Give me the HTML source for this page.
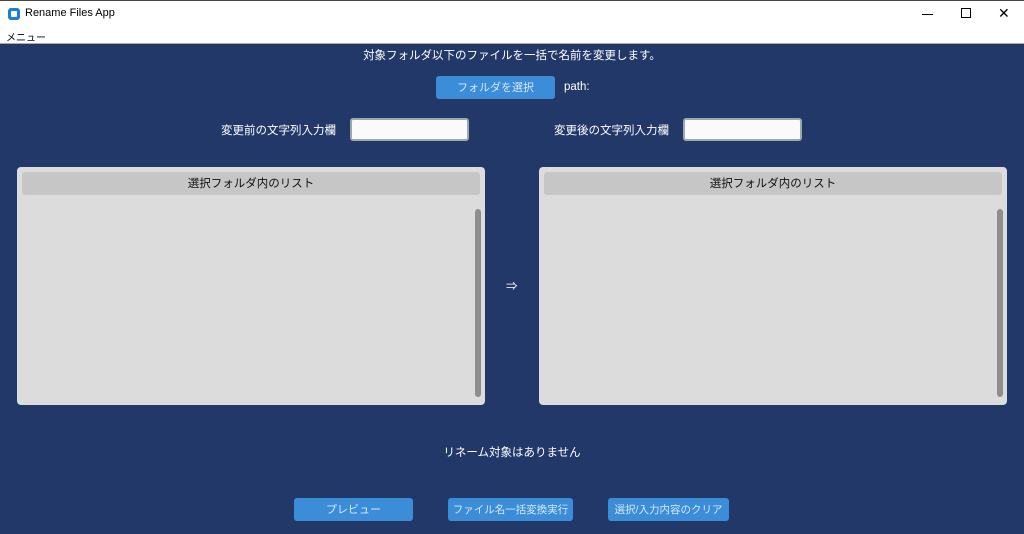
<!DOCTYPE html><html><head><meta charset="utf-8"><style>
*{margin:0;padding:0;box-sizing:border-box}
html,body{width:1024px;height:534px;overflow:hidden}
body{background:#223869;font-family:"Liberation Sans","Noto Sans CJK JP",sans-serif;position:relative;color:#fff}
.a{position:absolute;white-space:nowrap}
.tb{left:0;top:0;width:1024px;height:28px;background:#fff;border-top:1px solid #444;color:#000;font-size:12px}
.mb{left:0;top:28px;width:1024px;height:16px;background:#fff;color:#000;font-size:10px;border-bottom:1px solid #aaa}
.btn{background:#3a8dd6;border-radius:3px;color:#d8e8f8;font-size:11px;text-align:center;line-height:25px;height:23px;overflow:hidden}
.inp{background:#fafafa;border:2px solid #9aa;border-radius:3px;height:23px;width:119px}
.pn{background:#dcdcdc;border-radius:4px;width:468px;height:238px;top:167px}
.hd{left:5px;top:5px;right:5px;height:23px;background:#c6c6c6;border-radius:3px;color:#111;font-size:11.5px;text-align:center;line-height:25px}
.sb{right:4px;top:42px;width:6px;height:188px;background:#8e8e8e;border-radius:3px}
.t{font-size:11.5px}
</style></head><body>
<div class="a tb"><div class="a" style="left:8px;top:7px;width:12px;height:12px;background:#1a7fd8;border-radius:3px"><div class="a" style="left:3px;top:3px;width:6px;height:6px;background:#fff;border-radius:1px"></div></div><div class="a" style="left:25px;top:6px;font-size:11px">Rename Files App</div>
<div class="a" style="left:922px;top:13px;width:11px;height:1px;background:#000"></div>
<div class="a" style="left:961px;top:7px;width:10px;height:10px;border:1px solid #000"></div>
<div class="a" style="left:998px;top:4px;font-size:14px">✕</div></div>
<div class="a mb"><div class="a" style="left:6px;top:1px">メニュー</div></div>
<div class="a t" style="left:0;width:1024px;text-align:center;top:47px">対象フォルダ以下のファイルを一括で名前を変更します。</div>
<div class="a btn" style="left:436px;top:76px;width:119px">フォルダを選択</div>
<div class="a t" style="left:564px;top:81px">path:</div>
<div class="a t" style="left:221px;top:122px">変更前の文字列入力欄</div>
<div class="a inp" style="left:350px;top:118px"></div>
<div class="a t" style="left:554px;top:122px">変更後の文字列入力欄</div>
<div class="a inp" style="left:683px;top:118px"></div>
<div class="a pn" style="left:17px"><div class="a hd">選択フォルダ内のリスト</div><div class="a sb"></div></div>
<div class="a pn" style="left:539px"><div class="a hd">選択フォルダ内のリスト</div><div class="a sb"></div></div>
<div class="a t" style="left:506px;top:278px">⇒</div>
<div class="a t" style="left:0;width:1024px;text-align:center;top:444px">リネーム対象はありません</div>
<div class="a btn" style="left:294px;top:498px;width:119px">プレビュー</div>
<div class="a btn" style="left:448px;top:498px;width:125px;font-size:10.5px">ファイル名一括変換実行</div>
<div class="a btn" style="left:608px;top:498px;width:121px;font-size:10.5px">選択/入力内容のクリア</div>
</body></html>
